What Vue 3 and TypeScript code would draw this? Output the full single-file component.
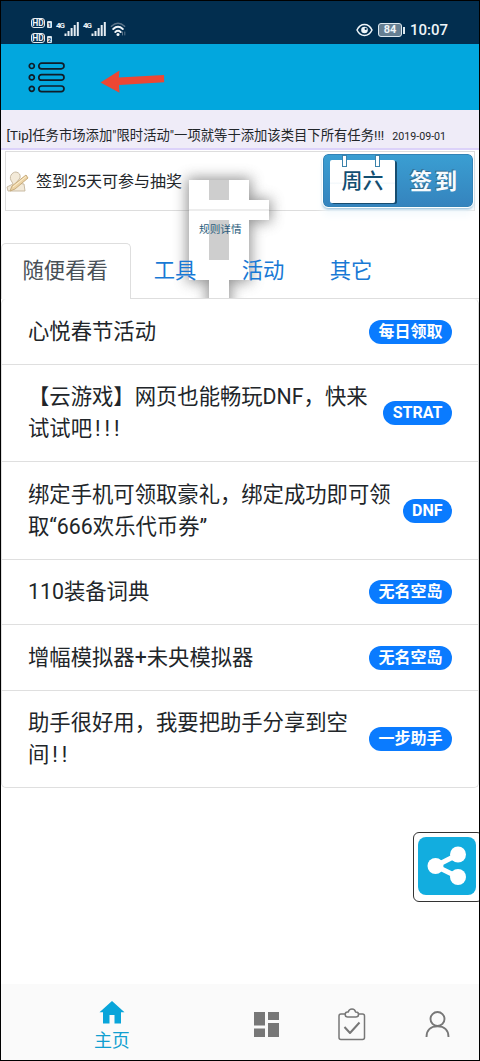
<script setup lang="ts">
interface Task {
  lines: { text: string; marks?: string }[]
  badge: string
}

const tabs: string[] = ['随便看看', '工具', '活动', '其它']

const tasks: Task[] = [
  { lines: [{ text: '心悦春节活动' }], badge: '每日领取' },
  { lines: [{ text: '【云游戏】网页也能畅玩DNF，快来' }, { text: '试试吧', marks: '!!!' }], badge: 'STRAT' },
  { lines: [{ text: '绑定手机可领取豪礼，绑定成功即可领' }, { text: '取“666欢乐代币券”' }], badge: 'DNF' },
  { lines: [{ text: '110装备词典' }], badge: '无名空岛' },
  { lines: [{ text: '增幅模拟器+未央模拟器' }], badge: '无名空岛' },
  { lines: [{ text: '助手很好用，我要把助手分享到空' }, { text: '间', marks: '!!' }], badge: '一步助手' },
]
</script>

<template>
  <div class="screen">
    <div class="status">
      <div class="hd">
        <div class="hd-row"><b>HD</b><i>1</i></div>
        <div class="hd-row"><b>HD</b><i>2</i></div>
      </div>
      <div v-for="n in 2" :key="n" class="signal">
        <span>4G</span>
        <svg width="16" height="15" viewBox="0 0 16 15" fill="#e6edf3">
          <rect x="0.5" y="11.5" width="2" height="2.5" />
          <rect x="3.5" y="9" width="2" height="5" />
          <rect x="6.6" y="6" width="2" height="8" />
          <rect x="9.7" y="3" width="2" height="11" />
          <rect x="12.8" y="0" width="2" height="14" />
        </svg>
      </div>
      <svg class="wifi" width="17" height="15" viewBox="0 0 17 15" fill="none" stroke-linecap="round">
        <path d="M1.4 4.2Q8 -1.6 14.6 4.2" stroke="#5c7489" stroke-width="1.5" />
        <path d="M3.2 7Q8 2.6 12.8 7" stroke="#f1f5f8" stroke-width="1.9" />
        <path d="M5.3 10Q8 7.6 10.7 10" stroke="#f1f5f8" stroke-width="1.9" />
        <circle cx="8" cy="12.4" r="1.5" fill="#f1f5f8" />
        <path d="M12.5 10v3M14.8 10v3" stroke="#5c7489" stroke-width="1" />
      </svg>
      <div class="status-right">
        <svg width="17" height="14" viewBox="0 0 17 14" fill="none" stroke="#eef4f8" stroke-width="1.5">
          <path d="M1 7C4.5-.4 12.500-.4 16 7C12.500 14.400 4.500 14.400 1 7Z" />
          <circle cx="8.500" cy="7" r="3.300" fill="#eef4f8" stroke="none" />
          <circle cx="9.700" cy="5.900" r="1.100" fill="#022e4f" stroke="none" />
        </svg>
        <div class="battery">84</div>
        <div class="nub"></div>
        <span class="time">10:07</span>
      </div>
    </div>

    <header class="topbar">
      <svg width="38" height="32" viewBox="0 0 38 32" fill="none" stroke="#101c28" stroke-width="1.700">
        <g v-for="n in 3" :key="n" :transform="`translate(0 ${(n - 1) * 11.4})`">
          <circle cx="3.800" cy="4" r="2.500" />
          <rect x="10.800" y="1.200" width="25.200" height="5.600" rx="2.800" />
        </g>
      </svg>
      <svg class="arrow" width="66" height="24" viewBox="0 0 66 24">
        <path d="M0.500 12.500L19.500 0.500L18.800 7.500L64 5L64.200 12.300L19 15L19.500 22.800Z" fill="#ec4734" />
      </svg>
    </header>

    <div class="tip"><span class="tip-text">[Tip]任务市场添加"限时活动"一项就等于添加该类目下所有任务!!!</span><span class="date">2019-09-01</span></div>

    <section class="sign">
      <div class="sign-box">
        <svg width="23" height="23" viewBox="0 0 23 23" fill="none" stroke-linejoin="round">
          <path d="M6 12C2 7 6 2 10 2Q15 3 14 8L10 13L18 14L19 21H2L1 17L7 14Z" fill="#f3ead9" stroke="#c9bba3" stroke-width="1" />
          <path d="M20 5L22 8L9 19L4 21L6 16Z" fill="#ecd3a6" stroke="#c8ac7c" stroke-width="1" />
          <path d="M7 17L20 6.500" stroke="#fff1cf" stroke-width="1" />
        </svg>
        <span>签到25天可参与抽奖</span>
      </div>

      <svg class="shape" width="130" height="148" viewBox="160 150 130 148">
        <defs>
          <filter id="soft" x="-50%" y="-50%" width="200%" height="200%">
            <feGaussianBlur stdDeviation="7" />
          </filter>
        </defs>
        <path d="M187 178H251V199H271V222H251V282H231V310H207V282H187Z" fill="#707070" opacity="0.750" filter="url(#soft)" />
        <path d="M209 180h20v20h-20zM209 220h20v40h-20z" fill="#cecece" />
        <path d="M189 180h20v20h20v-20h20v20h20v20h-20v60h-20v18h-20v-18h-20zM209 220v40h20v-40z" fill="#fff" fill-rule="evenodd" />
        <path d="M189 210H269" stroke="#e7e7e7" stroke-width="1.300" />
      </svg>
      <span class="rules">规则详情</span>

      <div class="sign-button">
        <div class="day">
          <i class="ring"></i><i class="ring"></i>
          <span>周六</span>
        </div>
        <span class="sign-label">签到</span>
      </div>
    </section>

    <nav class="tabs">
      <span v-for="(tab, i) in tabs" :key="tab" class="tab" :class="{ active: i === 0 }">{{ tab }}</span>
    </nav>

    <ul class="list">
      <li v-for="(task, i) in tasks" :key="i">
        <div class="title">
          <div v-for="line in task.lines" :key="line.text">{{ line.text }}<span v-if="line.marks" class="marks">{{ line.marks }}</span></div>
        </div>
        <span class="badge">{{ task.badge }}</span>
      </li>
    </ul>

    <div class="share">
      <svg width="58" height="58" viewBox="0 0 58 58">
        <rect width="58" height="58" rx="8" fill="#12addf" />
        <path d="M40 17.500L17.500 29L40 40" fill="none" stroke="#fff" stroke-width="5" />
        <g fill="#fff">
          <circle cx="40" cy="17.500" r="8" />
          <circle cx="17.500" cy="29" r="8" />
          <circle cx="40" cy="40" r="8" />
        </g>
      </svg>
    </div>

    <footer class="bottom">
      <div class="home">
        <svg width="26" height="23" viewBox="0 0 26 23"><path d="M13 0L25.500 11.300H22V22.500H15.500V14H10.500V22.500H4V11.300H0.500Z" fill="#09a5da" /></svg>
        <span>主页</span>
      </div>
      <div class="cell">
        <svg width="25" height="25" viewBox="0 0 25 25" fill="#777"><path d="M0 0h11v13.500H0zM14 0h11v8H14zM0 16.500h11V25H0zM14 11h11v14H14z" /></svg>
      </div>
      <div class="cell">
        <svg width="28" height="33" viewBox="0 0 28 33" fill="none" stroke="#777" stroke-width="1.500" stroke-linejoin="round">
          <path d="M7.500 6H3Q1 6 1 8V29.500Q1 31.500 3 31.500H24.500Q26.500 31.500 26.500 29.500V8Q26.500 6 24.500 6H20" />
          <path d="M9.500 9H18Q20.500 9 20.500 6.500T18 4H17.500Q17 1 14 1T10.200 4H9.500Q7.200 4 7.200 6.500T9.500 9Z" />
          <path d="M6.500 19L12 25L21.500 14.500" stroke-width="2" />
        </svg>
      </div>
      <div class="cell">
        <svg width="25" height="27" viewBox="0 0 25 27" fill="none" stroke="#777" stroke-width="1.900">
          <circle cx="12.500" cy="8" r="7" />
          <path d="M1.500 26C1.500 19 6 15.300 12.500 15.300S23.500 19 23.500 26" />
        </svg>
      </div>
    </footer>
  </div>
</template>

<style>
body {
  margin: 0;
  background: #fff;
}
</style>

<style scoped>
* {
  box-sizing: border-box;
}
.screen {
  position: relative;
  width: 480px;
  height: 1061px;
  border: 1px solid #000;
  background: #fff;
  color: #212529;
  font-family: Roboto, "Noto Sans CJK SC", sans-serif;
  text-spacing-trim: space-all;
  white-space: nowrap;
  overflow: hidden;
  display: flex;
  flex-direction: column;
}
.status {
  height: 43px;
  flex: none;
  background: #022e4f;
  display: flex;
  align-items: flex-start;
  padding: 16px 31px 0 30px;
  color: #eef4f8;
}
.hd {
  width: 25px;
}
.hd-row {
  display: flex;
  align-items: flex-end;
  gap: 2px;
  height: 15px;
}
.hd-row b {
  width: 14px;
  height: 10px;
  border: 1px solid #e6edf3;
  border-radius: 3px;
  font-size: 8.500px;
  line-height: 8px;
  text-align: center;
  margin-bottom: 4px;
}
.hd-row i {
  width: 5px;
  height: 7px;
  border-radius: 1px;
  background: #dce6ed;
  color: #022e4f;
  font: bold 6px/7px Roboto, sans-serif;
  text-align: center;
  margin-bottom: 4px;
}
.signal {
  display: flex;
  width: 27px;
  padding-top: 5px;
}
.signal span {
  width: 8px;
  font-size: 8px;
  line-height: 8px;
  font-weight: bold;
  letter-spacing: -1px;
}
.wifi {
  margin: 5px 0 0 0;
}
.status-right {
  margin-left: auto;
  height: 26px;
  display: flex;
  align-items: center;
}
.battery {
  width: 24px;
  height: 14px;
  margin-left: 5px;
  border: 1.500px solid #dce8ef;
  border-radius: 3px;
  background: #667f92;
  font-size: 11px;
  line-height: 12px;
  font-weight: 700;
  text-align: center;
}
.nub {
  width: 2px;
  height: 7px;
  margin-left: 1px;
  background: #dce8ef;
}
.time {
  margin-left: 5px;
  font-size: 15px;
  line-height: 26px;
  font-weight: 500;
}
.topbar {
  height: 66px;
  flex: none;
  background: #02a7de;
  display: flex;
  padding: 18px 0 0 27px;
}
.arrow {
  margin: 8px 0 0 34px;
}
.tip {
  height: 40px;
  flex: none;
  background: #efecf8;
  border-bottom: 2px solid #dcd2fa;
  padding: 16px 0 0 5.500px;
  display: flex;
  align-items: baseline;
  line-height: 20px;
}
.tip-text {
  font-size: 13.330px;
}
.date {
  margin-left: 8px;
  font-size: 10.670px;
}
.sign {
  position: relative;
  height: 93px;
  flex: none;
  padding: 1px 4px;
}
.sign-box {
  height: 60px;
  border: 1px solid #ddd;
  display: flex;
  align-items: center;
  font-size: 16px;
  gap: 7px;
}
.sign-box span {
  position: relative;
  top: -1px;
}
.shape {
  position: absolute;
  left: 159px;
  top: 0;
}
.rules {
  position: absolute;
  left: 198px;
  top: 72px;
  font-size: 10.670px;
  line-height: 16px;
  color: #2b5d7c;
}
.sign-button {
  position: absolute;
  left: 322px;
  top: 4px;
  width: 150px;
  height: 53px;
  border-radius: 5px;
  background: linear-gradient(#3a9ed2, #3584be);
  border: 1px solid #3383b6;
  box-shadow: 0 2px 3px #87b5d3, 0 8px 8px #f4fafd;
  outline: 1px solid #fff;
  display: flex;
  padding: 5px 0 0 6px;
}
.day {
  position: relative;
  width: 65px;
  height: 43px;
  background: linear-gradient(#fff 52%, #edf5f9 53%, #fff 57%);
  border-radius: 2px;
  box-shadow: 2px 1px 0 #174d70;
  color: #124e71;
  font-size: 21px;
  font-weight: 500;
  line-height: 43px;
  text-align: center;
}
.ring {
  position: absolute;
  top: -5px;
  left: 12px;
  width: 5px;
  height: 12px;
  border: 1px solid #3b82aa;
  background: #fff;
}
.ring + .ring {
  left: 45px;
}
.sign-label {
  margin-left: 15px;
  font-size: 22px;
  font-weight: 700;
  line-height: 43px;
  letter-spacing: 3px;
  color: #f7fbfd;
  text-shadow: -1px -1px 0 #376b8c;
}
.tabs {
  position: relative;
  z-index: 1;
  height: 56px;
  flex: none;
  display: flex;
  border-bottom: 1.330px solid #dedede;
}
.tab {
  padding: 12px 22.670px 0;
  font-size: 21.330px;
  line-height: 32px;
  color: #1879d5;
}
.tab.active {
  width: 130px;
  height: 56px;
  padding: 11px 0 0 20.500px;
  border: 1px solid #dedede;
  border-bottom: 0;
  border-radius: 5px 5px 0 0;
  background: #fff;
  color: #495057;
}
.list {
  margin: 0;
  padding: 0;
  flex: none;
  list-style: none;
  border: 1px solid #dfdfdf;
  border-top: 0;
  border-radius: 5px;
}
.list li {
  display: flex;
  align-items: center;
  justify-content: space-between;
  padding: 16.500px 26px 16px 26px;
  border-bottom: 1px solid #dfdfdf;
  font-size: 21.330px;
  line-height: 32px;
}
.list li:last-child {
  border-bottom: 0;
}
.marks {
  letter-spacing: 4px;
  padding-left: 3px;
}
.badge {
  height: 24px;
  padding: 0 9.500px;
  border-radius: 12px;
  background: #0a7bff;
  color: #fff;
  font-size: 16px;
  font-weight: 700;
  line-height: 24px;
}
.share {
  position: absolute;
  left: 412px;
  top: 831px;
  width: 70px;
  height: 70px;
  padding: 4px;
  border: 1.500px solid #333;
  border-radius: 6px;
}
.bottom {
  margin-top: auto;
  height: 76px;
  flex: none;
  background: #fafafa;
  display: flex;
}
.home {
  width: 222px;
  display: flex;
  flex-direction: column;
  align-items: center;
  padding-top: 17px;
  color: #109fd0;
  font-size: 18px;
  line-height: 34px;
}
.cell {
  width: 85.500px;
  height: 80px;
  display: flex;
  align-items: center;
  justify-content: center;
}
.cell:nth-child(2) {
  padding-left: 2px;
}
.cell:nth-child(3),
.cell:nth-child(4) {
  padding-left: 1.500px;
}
</style>
